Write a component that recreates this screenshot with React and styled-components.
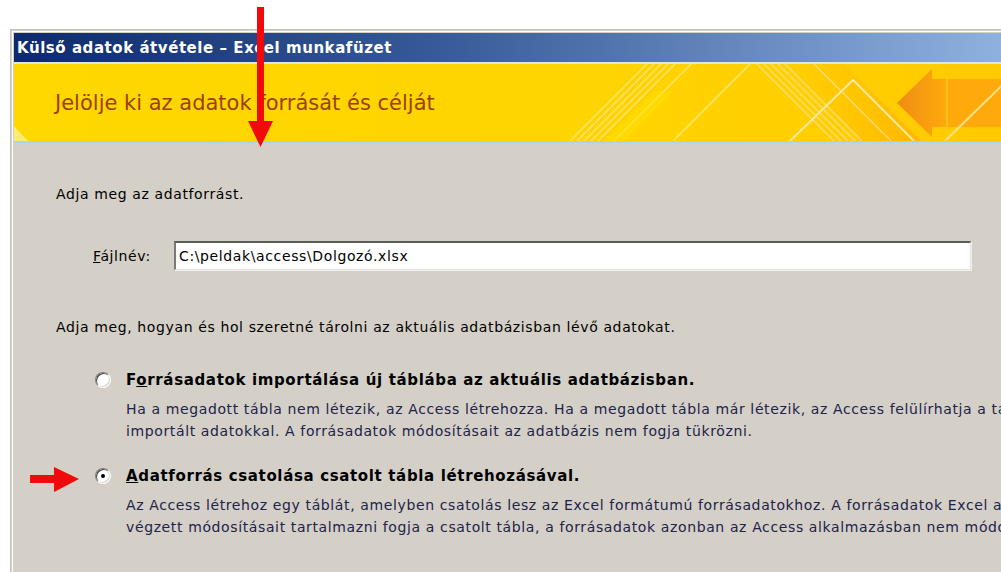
import React from 'react';
import styled, { createGlobalStyle } from 'styled-components';

const GlobalStyle = createGlobalStyle`
  html, body {
    margin: 0;
    padding: 0;
    background: #ffffff;
    overflow: hidden;
  }
  body {
    font-family: "DejaVu Sans", Verdana, sans-serif;
  }
`;

const BannerArt = () => (
  <ArtSvg width="1100" height="77" viewBox="0 0 1100 77">
    <defs>
      <linearGradient id="arrowFill" x1="0" x2="1" y1="0" y2="0">
        <stop offset="0" stopColor="#f08c14" />
        <stop offset="1" stopColor="#ffa90c" />
      </linearGradient>
      <linearGradient id="shadeFill" x1="0" x2="1" y1="0" y2="0">
        <stop offset="0" stopColor="#ffc400" stopOpacity="0" />
        <stop offset="1" stopColor="#ffb400" stopOpacity="0.9" />
      </linearGradient>
    </defs>
    {/* soft glow in the lower left corner */}
    <path d="M0 62 L14 77 L0 77 Z" fill="#fff3a0" opacity="0.7" />
    {/* bundle of thin rising stripes */}
    <g stroke="#ffe88a" strokeWidth="1.4" opacity="0.85">
      <line x1="556" y1="77" x2="633" y2="0" />
      <line x1="563" y1="77" x2="640" y2="0" />
      <line x1="570" y1="77" x2="647" y2="0" />
      <line x1="577" y1="77" x2="654" y2="0" />
      <line x1="584" y1="77" x2="661" y2="0" />
      <line x1="600" y1="77" x2="677" y2="0" />
    </g>
    <path d="M590 77 L640 27 L660 27 L610 77 Z" fill="#ffe200" opacity="0.5" />
    <line x1="659" y1="77" x2="736" y2="0" stroke="#ffe45a" strokeWidth="2" />
    {/* darker wedge and falling stripes */}
    <path d="M770 0 L830 0 L907 77 L847 77 Z" fill="url(#shadeFill)" />
    <g stroke="#ffe08a" strokeWidth="1.4" opacity="0.85">
      <line x1="743" y1="0" x2="820" y2="77" />
      <line x1="750" y1="0" x2="827" y2="77" />
      <line x1="757" y1="0" x2="834" y2="77" />
      <line x1="764" y1="0" x2="841" y2="77" />
      <line x1="771" y1="0" x2="848" y2="77" />
      <line x1="800" y1="0" x2="877" y2="77" />
    </g>
    {/* peak line */}
    <polyline points="776,77 839,16 900,77" fill="none" stroke="#ffe9a0" strokeWidth="2" />
    {/* arrow pointing left */}
    <path d="M883 39 L918 5 L918 15 L932 15 L932 63 L918 63 L918 73 Z" fill="url(#arrowFill)" />
    <rect x="932" y="15" width="2" height="48" fill="#ffc21a" />
    <rect x="934" y="15" width="170" height="48" fill="#ffa90c" />
    <line x1="931" y1="77" x2="1010" y2="0" stroke="#ffe38a" strokeWidth="2" />
  </ArtSvg>
);

const RedArrowDown = () => (
  <DownArrow width="28" height="142" viewBox="0 0 28 142">
    <rect x="10" y="0" width="7" height="116" fill="#f20a0a" />
    <polygon points="1,114 26,114 13.5,140" fill="#f20a0a" />
  </DownArrow>
);

const RedArrowRight = () => (
  <RightArrow width="50" height="26" viewBox="0 0 50 26">
    <rect x="0" y="8" width="26" height="8" fill="#f20a0a" />
    <polygon points="24,0 49,12 24,25" fill="#f20a0a" />
  </RightArrow>
);

const Option = ({ checked, accessKey, rest, lines }) => (
  <OptionRow>
    <Radio $checked={checked} />
    <OptionText>
      <OptionLabel>
        {accessKey[0]}<u>{accessKey[1]}</u>{rest}
      </OptionLabel>
      <OptionDesc>
        {lines.map((l) => (
          <div key={l}>{l}</div>
        ))}
      </OptionDesc>
    </OptionText>
  </OptionRow>
);

export default function App() {
  return (
    <>
      <GlobalStyle />
      <Page>
        <Window>
          <TitleBar>Külső adatok átvétele – Excel munkafüzet</TitleBar>
          <Banner>
            <BannerArt />
            <BannerTitle>Jelölje ki az adatok forrását és célját</BannerTitle>
          </Banner>
          <Content>
            <Prompt>Adja meg az adatforrást.</Prompt>
            <FieldRow>
              <FieldLabel>
                <u>F</u>ájlnév:
              </FieldLabel>
              <TextBox>C:\peldak\access\Dolgozó.xlsx</TextBox>
            </FieldRow>
            <Prompt $top={49}>
              Adja meg, hogyan és hol szeretné tárolni az aktuális adatbázisban lévő adatokat.
            </Prompt>
            <Options>
              <Option
                accessKey={['F', 'o']}
                rest="rrásadatok importálása új táblába az aktuális adatbázisban."
                lines={[
                  'Ha a megadott tábla nem létezik, az Access létrehozza. Ha a megadott tábla már létezik, az Access felülírhatja a tartalmát az',
                  'importált adatokkal. A forrásadatok módosításait az adatbázis nem fogja tükrözni.',
                ]}
              />
              <Option
                checked
                accessKey={['', 'A']}
                rest="datforrás csatolása csatolt tábla létrehozásával."
                lines={[
                  'Az Access létrehoz egy táblát, amelyben csatolás lesz az Excel formátumú forrásadatokhoz. A forrásadatok Excel alkalmazásban',
                  'végzett módosításait tartalmazni fogja a csatolt tábla, a forrásadatok azonban az Access alkalmazásban nem módosíthatók.',
                ]}
              />
            </Options>
          </Content>
        </Window>
        <RedArrowDown />
        <RedArrowRight />
      </Page>
    </>
  );
}

const Page = styled.div`
  position: relative;
  width: 1001px;
  height: 572px;
  overflow: hidden;
  padding: 29px 0 0 10px;
  box-sizing: border-box;
`;

/* the dialog runs past the right edge of the page */
const Window = styled.div`
  width: 1160px;
  height: 600px;
  background: #d4d0c8;
  border-left: 1px solid #c8c4bc;
  border-top: 1px solid #c8c4bc;
  box-shadow: inset 1px 1px 0 #d4d0c8, inset 2px 2px 0 #ffffff;
  padding: 3px 0 0 3px;
  box-sizing: border-box;
`;

const TitleBar = styled.div`
  height: 29px;
  display: flex;
  align-items: center;
  padding-left: 3px;
  background: linear-gradient(to right, #0c2a6c 0%, #3a5c9a 38%, #8fb2e0 86%, #a6caf0 100%);
  color: #ffffff;
  font-family: "DejaVu Sans", Verdana, sans-serif;
  font-weight: bold;
  font-size: 15px;
  letter-spacing: 0.55px;
  border-bottom: 2px solid #e6e4de;
`;

const Banner = styled.div`
  position: relative;
  height: 77px;
  display: flex;
  align-items: center;
  padding-left: 41px;
  background: linear-gradient(to right, #ffd800 0%, #ffd400 50%, #ffc600 100%);
  border-bottom: 2px solid #b2d0ec;
  overflow: hidden;
`;

const ArtSvg = styled.svg`
  position: absolute;
  left: 0;
  top: 0;
`;

const BannerTitle = styled.div`
  position: relative;
  font-family: "DejaVu Sans", Verdana, sans-serif;
  font-size: 21px;
  color: #9c3f00;
`;

const Content = styled.div`
  display: flex;
  flex-direction: column;
  align-items: flex-start;
  padding: 43px 0 0 42px;
  font-size: 14px;
  letter-spacing: 0.62px;
  color: #000000;
`;

const Prompt = styled.div`
  line-height: 16px;
  margin-top: ${(p) => p.$top || 0}px;
  white-space: nowrap;
`;

const FieldRow = styled.div`
  display: flex;
  align-items: center;
  margin: 39px 0 0 37px;
`;

const FieldLabel = styled.div`
  width: 81px;
  color: #000000;
`;

const TextBox = styled.div`
  width: 797px;
  height: 29px;
  box-sizing: border-box;
  display: flex;
  align-items: center;
  padding-left: 3px;
  background: #ffffff;
  border-style: solid;
  border-width: 2px 1px 1px 2px;
  border-color: #5a5a5a #e4e2dc #e4e2dc #7a7a7a;
  box-shadow: 1px 1px 0 #f0efea;
`;

const Options = styled.div`
  display: flex;
  flex-direction: column;
  gap: 26px;
  margin: 37px 0 0 39px;
`;

const OptionRow = styled.div`
  display: flex;
  align-items: flex-start;
`;

const Radio = styled.span`
  position: relative;
  width: 16px;
  height: 16px;
  margin-right: 15px;
  border-radius: 50%;
  box-sizing: border-box;
  background: #ffffff;
  border: 1px solid;
  border-color: #808080 #ffffff #ffffff #808080;
  box-shadow: inset 1px 1px 0 #404040, inset -1px -1px 0 #d4d0c8;
  flex-shrink: 0;
  &::after {
    content: '';
    display: ${(p) => (p.$checked ? 'block' : 'none')};
    position: absolute;
    left: 5px;
    top: 5px;
    width: 4px;
    height: 4px;
    border-radius: 50%;
    background: #000000;
  }
`;

const OptionText = styled.div`
  display: flex;
  flex-direction: column;
  white-space: nowrap;
`;

const OptionLabel = styled.div`
  font-weight: bold;
  font-size: 15px;
  line-height: 16px;
  letter-spacing: 0.65px;
  color: #000000;
`;

const OptionDesc = styled.div`
  margin-top: 10px;
  line-height: 22px;
  color: #22224a;
`;

const DownArrow = styled.svg`
  position: absolute;
  left: 247px;
  top: 7px;
`;

const RightArrow = styled.svg`
  position: absolute;
  left: 30px;
  top: 467px;
`;
